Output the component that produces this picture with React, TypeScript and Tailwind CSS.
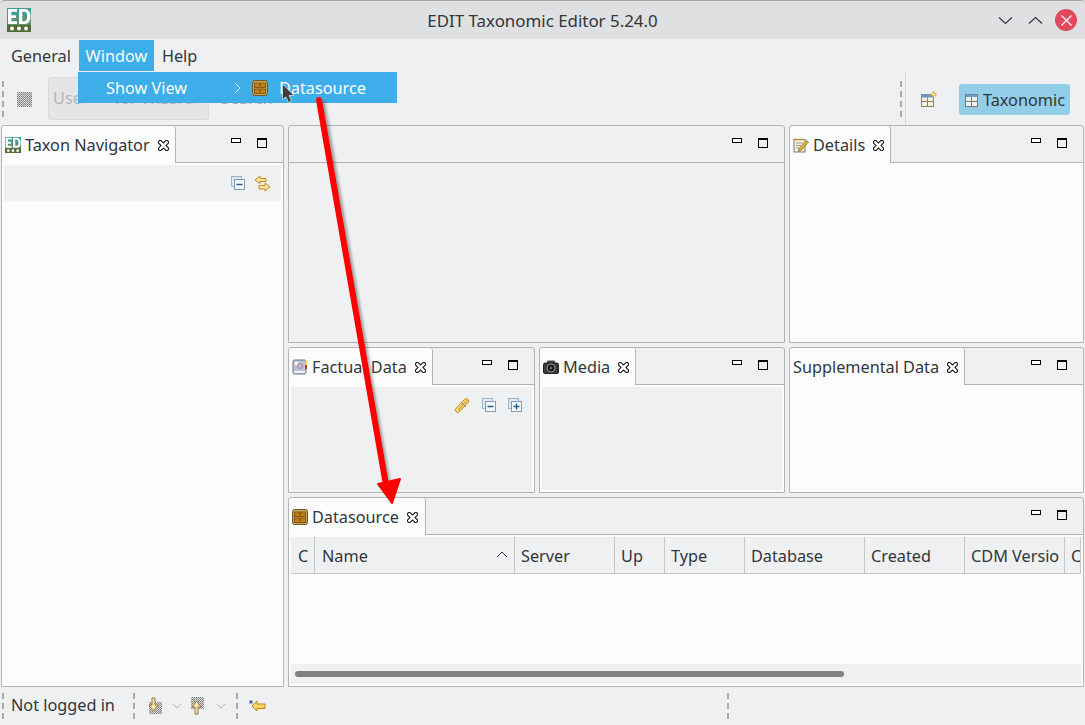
const BORDER = "border-[#b1b3b5]";

function CloseX() {
  return (
    <svg width="11" height="11" viewBox="0 0 11 11" className="shrink-0">
      <path d="M1.5 .5 L3 .5 L5.5 3 L8 .5 L9.5 .5 L10.5 1.5 L10.5 3 L8 5.5 L10.5 8 L10.5 9.5 L9.5 10.5 L8 10.5 L5.5 8 L3 10.5 L1.5 10.5 L.5 9.5 L.5 8 L3 5.5 L.5 3 L.5 1.5 Z" fill="#fff" stroke="#1f2327" strokeWidth="1.1" />
    </svg>
  );
}

function MinMax() {
  return (
    <div className="flex items-center gap-[16px]">
      <div className="mb-[4px] h-[5px] w-[10px] border border-black bg-white" />
      <div className="h-[10px] w-[10px] border border-black border-t-[2px]" />
    </div>
  );
}

function CollapseIcon({ plus }: { plus?: boolean }) {
  return (
    <svg width="16" height="16" viewBox="0 0 16 16">
      <rect x="1.5" y="1.5" width="10" height="10" fill="#dbe8f2" stroke="#9ab6cc" />
      <rect x="4.5" y="4.5" width="10" height="10" fill="#f4f8fb" stroke="#7d9db8" />
      <path d="M6.5 9.5h6" stroke="#1d5f8f" strokeWidth="1.4" />
      {plus && <path d="M9.5 6.5v6" stroke="#1d5f8f" strokeWidth="1.4" />}
    </svg>
  );
}

function LinkArrows() {
  return (
    <svg width="17" height="17" viewBox="0 0 17 17">
      <path d="M6 1 L1 5 L6 8.5 V6.5 H12 V3.5 H6 Z" fill="#fbe3a0" stroke="#c08a1c" />
      <path d="M11 8 L16 12 L11 16 V14 H5 V10.5 H11 Z" fill="#fbe3a0" stroke="#c08a1c" />
    </svg>
  );
}

function PencilLink() {
  return (
    <svg width="17" height="17" viewBox="0 0 17 17">
      <path d="M1.5 12 L11 2 C12.5 .8 15.5 2.5 14.5 5 L5 15 C3.5 16.2 .5 14.5 1.5 12 Z" fill="#f8d97c" stroke="#b9851d" />
      <path d="M4 13 L13 3.5 M7 5 L12 10" stroke="#b9851d" />
    </svg>
  );
}

function EdLogo({ size }: { size: number }) {
  return (
    <svg width={size} height={size} viewBox="0 0 24 24" className="shrink-0">
      <rect width="24" height="24" fill="#5a8f6f" />
      <rect width="24" height="8" fill="#3f9c96" />
      <rect y="17" width="24" height="7" fill="#556b35" />
      <path d="M1 1h9v2.800H4.400v3.400H9V10H4.400v3.200H10V16H1Z" fill="#fff" />
      <path d="M12 1h5.500C21.500 1 23.500 4 23.500 8.500S21.500 16 17.500 16H12Zm3.300 2.800v9.400h2c2 0 2.900-2 2.900-4.700s-.9-4.700-2.900-4.700Z" fill="#fff" />
      <circle cx="5" cy="20.500" r="2" fill="#fff" />
      <circle cx="12" cy="20.500" r="2" fill="#fff" />
      <circle cx="19" cy="20.500" r="2" fill="#fff" />
    </svg>
  );
}

function DrawerIcon() {
  return (
    <svg width="16" height="16" viewBox="0 0 16 16" className="shrink-0">
      <rect x=".5" y=".5" width="15" height="15" rx="2" fill="#c9a45c" stroke="#6d5a2a" />
      <rect x="2.500" y="3" width="11" height="4.500" fill="#c87f12" stroke="#6e4a0c" strokeWidth=".8" />
      <rect x="2.500" y="9" width="11" height="4.500" fill="#c87f12" stroke="#6e4a0c" strokeWidth=".8" />
      <path d="M7 5h2M7 11h2" stroke="#3d2a05" />
    </svg>
  );
}

function NoteIcon() {
  return (
    <svg width="16" height="16" viewBox="0 0 16 16" className="shrink-0">
      <rect x="1" y="2.500" width="11" height="12.500" fill="#f4f1e4" stroke="#7d7a6c" />
      <path d="M1.500 2.500h10" stroke="#d9a520" strokeWidth="2" strokeDasharray="1 1" />
      <path d="M3 6h7M3 8.500h5M3 11h4" stroke="#9a9a90" />
      <path d="M6 12 L13.500 3.500 L15.500 5 L8 13.500 L5.500 14.500 Z" fill="#e9b93a" stroke="#8a6412" strokeWidth=".8" />
    </svg>
  );
}

function BookIcon() {
  return (
    <svg width="16" height="16" viewBox="0 0 16 16" className="shrink-0">
      <rect x="1" y="1" width="13" height="14" rx="1.500" fill="#b9c2dc" stroke="#6a7488" />
      <rect x="13" y="2" width="2" height="4" fill="#e8d92f" />
      <rect x="13" y="6" width="2" height="4" fill="#d22e2e" />
      <circle cx="4.500" cy="4.500" r="2" fill="#fff8d0" />
      <circle cx="8" cy="7" r="2.500" fill="none" stroke="#b77aa0" />
      <rect x="2" y="12" width="11" height="2" fill="#eef0f5" />
    </svg>
  );
}

function CameraIcon() {
  return (
    <svg width="16" height="16" viewBox="0 0 16 16" className="shrink-0">
      <rect x="4" y="1.500" width="8" height="4" rx="1" fill="#4a4a4a" />
      <rect x=".5" y="4" width="15" height="10.500" rx="1.500" fill="#3a3a3a" stroke="#222" />
      <circle cx="8" cy="9" r="4" fill="#111" stroke="#999" />
      <circle cx="8" cy="9" r="1.500" fill="#6b6b6b" />
    </svg>
  );
}

type TabDef = { title?: string; icon?: React.ReactNode; width?: string };

function Folder({
  tab,
  className,
  bodyClass,
  children,
}: {
  tab?: TabDef;
  className?: string;
  bodyClass?: string;
  children?: React.ReactNode;
}) {
  return (
    <div className={`flex min-w-0 flex-col overflow-hidden rounded-t-[3px] border ${BORDER} bg-[#eff0f1] ${className ?? ""}`}>
      <div className="flex h-[37px] shrink-0">
        {tab ? (
          <div className={`flex items-center gap-[4px] rounded-t-[3px] border-r ${BORDER} bg-[#fcfcfc] pl-[3px] pt-px ${tab.width ?? ""}`}>
            {tab.icon}
            <span className="whitespace-nowrap text-[#31363b]">{tab.title}</span>
            <span className="ml-[4px]"><CloseX /></span>
          </div>
        ) : null}
        <div className={`flex flex-1 items-center justify-end border-b ${BORDER} pb-[3px] pr-[16px]`}>
          <MinMax />
        </div>
      </div>
      <div className={`flex min-h-0 flex-1 flex-col ${bodyClass ?? "bg-[#fcfcfc]"}`}>{children}</div>
    </div>
  );
}

function Grip({ className }: { className?: string }) {
  return <div className={`w-[2px] border-l-2 border-dashed border-[#a9abad] ${className ?? ""}`} />;
}

const columns = [
  { label: "C", w: "w-[24px]", pad: "pl-[7px] pr-[5px]" },
  { label: "Name", w: "w-[200px]", pad: "pl-[7px] pr-[5px]" },
  { label: "Server", w: "w-[100px]", pad: "pl-[6px] pr-[5px]" },
  { label: "Up", w: "w-[50px]", pad: "pl-[6px] pr-[5px]" },
  { label: "Type", w: "w-[80px]", pad: "pl-[6px] pr-[5px]" },
  { label: "Database", w: "w-[120px]", pad: "pl-[6px] pr-[5px]" },
  { label: "Created", w: "w-[100px]", pad: "pl-[6px] pr-[5px]" },
  { label: "CDM Versio", w: "w-[100px]", pad: "pl-[6px] pr-[5px]" },
  { label: "C", w: "flex-1", pad: "pl-[6px]" },
];

export default function App() {
  return (
    <div
      className="relative flex h-[725px] w-[1085px] flex-col overflow-hidden bg-[#eff0f1] text-[16.25px] text-[#31363b]"
      style={{ fontFamily: '"Noto Sans", sans-serif' }}
    >
      {/* title bar */}
      <div className="relative flex h-[39px] shrink-0 items-center justify-center rounded-t-[4px] border-t border-[#a5a6a7] bg-[#dfe0e1] pt-px">
        <span className="absolute left-[7px] top-[7px]"><EdLogo size={24} /></span>
        <span className="text-[16.9px]">EDIT Taxonomic Editor 5.24.0</span>
        <div className="absolute right-[8px] top-[8px] flex items-center gap-[15px]">
          <svg width="15" height="9" viewBox="0 0 15 9"><path d="M1 1.500 L7.500 7.500 L14 1.500" fill="none" stroke="#31363b" strokeWidth="1.200" /></svg>
          <svg width="15" height="9" viewBox="0 0 15 9"><path d="M1 7.500 L7.500 1.500 L14 7.500" fill="none" stroke="#31363b" strokeWidth="1.200" /></svg>
          <div className="-ml-[3px] flex h-[22px] w-[22px] items-center justify-center rounded-full bg-[#e2495f]">
            <svg width="11" height="11" viewBox="0 0 11 11"><path d="M.5 .5 L10.500 10.500 M10.500 .5 L.5 10.500" stroke="#fff" strokeWidth="1.200" /></svg>
          </div>
        </div>
      </div>

      {/* menu bar */}
      <div className="flex h-[33px] shrink-0 items-stretch pb-px pl-[5px] pt-px">
        <div className="flex items-center px-[6px] pt-px">General</div>
        <div className="ml-[2px] flex w-[75px] items-center justify-center bg-[#3daee9] pt-px text-[#fcfcfc]">Window</div>
        <div className="flex items-center px-[8px] pt-px">Help</div>
      </div>

      {/* toolbar */}
      <div className="flex h-[53px] shrink-0 items-center pl-[2px]">
        <Grip className="h-[36px]" />
        <svg width="15" height="15" viewBox="0 0 15 15" className="ml-[13px] mt-[2px]">
          <defs>
            <pattern id="dith" width="2" height="2" patternUnits="userSpaceOnUse">
              <rect width="2" height="2" fill="#dcdcdc" />
              <rect width="1" height="1" fill="#7a7a7a" />
              <rect x="1" y="1" width="1" height="1" fill="#8e8e8e" />
            </pattern>
          </defs>
          <rect width="15" height="15" rx="1" fill="url(#dith)" />
        </svg>
        <div className="ml-[16px] flex h-[43px] w-[161px] items-center rounded-[3px] border border-[#d9dadb] bg-[#e4e5e6] pl-[4px] text-[#b4b6b8]">
          Use
          <span className="ml-[33px]">for Wizard</span>
        </div>
        <span className="ml-[12px] text-[#a8aaac]">Search</span>
        <div className="flex-1" />
        <Grip className="h-[36px]" />
        <div className="ml-[3px] h-[52px] border-l border-[#d4d5d6]" />
        <svg width="16" height="16" viewBox="0 0 16 16" className="ml-[15px]">
          <rect x=".5" y="3.500" width="12" height="12" fill="#f4f1e4" stroke="#8a8468" />
          <rect x=".5" y="3.500" width="12" height="3" fill="#6d9bd0" />
          <path d="M6.500 6.500v9M.5 10.500h12" stroke="#8a8468" />
          <path d="M12.500 .5l1 2 2 1-2 1-1 2-1-2-2-1 2-1Z" fill="#fdf0b0" stroke="#d09a1d" />
        </svg>
        <div className="ml-[22px] mr-[15px] mt-[2px] flex h-[31px] w-[111px] items-center rounded-[3px] bg-[#93cee9] pl-[6px] pt-px">
          <svg width="13" height="13" viewBox="0 0 13 13" className="shrink-0">
            <rect x=".5" y=".5" width="12" height="12" fill="#eef3f5" stroke="#7a7a6c" />
            <rect x=".5" y=".5" width="12" height="2.500" fill="#6d9bd0" />
            <path d="M6.500 3v9.500M.5 7.500h12" stroke="#7a7a6c" />
          </svg>
          <span className="ml-[5px]">Taxonomic</span>
        </div>
      </div>

      {/* perspective */}
      <div className="flex min-h-0 flex-1 gap-[4px] px-px">
        <Folder tab={{ title: "Taxon Navigator", icon: <EdLogo size={16} />, width: "w-[174px]" }} className="w-[283px] shrink-0">
          <div className="mx-[2px] mt-[2px] flex h-[36px] items-center justify-end gap-[8px] bg-[#eff0f1] pr-[10px]">
            <CollapseIcon />
            <LinkArrows />
          </div>
        </Folder>

        <div className="flex min-w-0 flex-1 flex-col gap-[4px]">
          <div className="flex h-[218px] shrink-0 gap-[4px]">
            <Folder className="flex-1" bodyClass="bg-[#eff0f1]" />
            <Folder tab={{ title: "Details", icon: <NoteIcon />, width: "w-[101px]" }} className="w-[295px] shrink-0" />
          </div>
          <div className="flex h-[146px] shrink-0 gap-[4px]">
            <Folder tab={{ title: "Factual Data", icon: <BookIcon />, width: "w-[144px]" }} className="w-[247px] shrink-0">
              <div className="mx-[2px] mt-[2px] flex flex-1 items-start justify-end gap-[10px] bg-[#eff0f1] pr-[9px] pt-[10px]">
                <PencilLink />
                <CollapseIcon />
                <CollapseIcon plus />
              </div>
            </Folder>
            <Folder tab={{ title: "Media", icon: <CameraIcon />, width: "w-[96px]" }} className="flex-1">
              <div className="mx-[2px] mb-[2px] mt-[2px] flex-1 bg-[#eff0f1]" />
            </Folder>
            <Folder tab={{ title: "Supplemental Data", width: "w-[175px]" }} className="w-[295px] shrink-0" />
          </div>
          <Folder tab={{ title: "Datasource", icon: <DrawerIcon />, width: "w-[137px]" }} className="flex-1">
            <div className="mx-[2px] mt-[2px] flex h-[37px] shrink-0 border-b border-[#c3c5c6] bg-[#eff0f1]">
              {columns.map((col, i) => (
                <div
                  key={i}
                  className={`relative flex min-w-0 items-center overflow-hidden whitespace-nowrap border-r border-[#c3c5c6] pt-[2px] ${col.w} ${col.pad}`}
                >
                  <span className="block min-w-0 overflow-hidden">{col.label}</span>
                  {col.label === "Name" && (
                    <svg width="12" height="7" viewBox="0 0 12 7" className="absolute right-[6px] top-[14px]">
                      <path d="M1 6 L6 1 L11 6" fill="none" stroke="#31363b" strokeWidth="1" />
                    </svg>
                  )}
                </div>
              ))}
            </div>
            <div className="flex-1" />
            <div className="mx-[2px] mb-[2px] flex h-[20px] shrink-0 items-center bg-[#eff0f1] px-[4px]">
              <div className="h-[6px] w-[549px] rounded-full bg-[#7f8080]" />
            </div>
          </Folder>
        </div>
      </div>

      {/* status bar */}
      <div className="flex h-[38px] shrink-0 items-center pl-[2px]">
        <Grip className="h-[26px]" />
        <span className="ml-[7px] w-[122px] pb-px">Not logged in</span>
        <Grip className="h-[26px]" />
        <svg width="15" height="18" viewBox="0 0 15 18" className="ml-[13px]">
          <rect x="1" y="5" width="13" height="12" fill="url(#dith)" />
          <path d="M4 1h3v7h3l-4.500 6L1 8h3Z" fill="#f5e2b8" stroke="#9a7a3a" />
        </svg>
        <svg width="10" height="6" viewBox="0 0 10 6" className="ml-[9px]"><path d="M1 1l4 4 4-4" fill="none" stroke="#b4b6b8" /></svg>
        <svg width="15" height="18" viewBox="0 0 15 18" className="ml-[8px]">
          <rect x="1" y="0" width="13" height="12" fill="url(#dith)" />
          <path d="M5 17h3v-7h3L6.500 4 2 10h3Z" fill="#f5e2b8" stroke="#9a7a3a" />
        </svg>
        <svg width="10" height="6" viewBox="0 0 10 6" className="ml-[11px]"><path d="M1 1l4 4 4-4" fill="none" stroke="#b4b6b8" /></svg>
        <Grip className="ml-[10px] h-[26px]" />
        <svg width="17" height="13" viewBox="0 0 17 13" className="ml-[11px]">
          <path d="M8 1 L3 6 L8 11 V8.500 H16 V4 H8 Z" fill="#fbd667" stroke="#b5831b" />
          <path d="M0 2h4M2 0v4M.6 .6l2.800 2.800M3.400 .6L.6 3.400" stroke="#27509b" strokeWidth=".8" />
        </svg>
        <Grip className="ml-[461px] h-[26px]" />
      </div>

      {/* open submenu */}
      <div className="absolute left-[78px] top-[72px] flex h-[31px] w-[319px] items-center bg-[#3daee9] pt-px text-[#fcfcfc]">
        <span className="ml-[28px] w-[126px]">Show View</span>
        <svg width="8" height="12" viewBox="0 0 8 12" className="ml-[2px]"><path d="M1 1l5 5-5 5" fill="none" stroke="#fcfcfc" strokeWidth="1" /></svg>
        <span className="ml-[10px]"><DrawerIcon /></span>
        <span className="ml-[11px]">Datasource</span>
      </div>

      {/* cursor */}
      <svg width="14" height="21" viewBox="0 0 14 21" className="absolute left-[281px] top-[83px]">
        <path d="M1.500 1 V16.500 L5 14 L7.500 19.500 L10.500 18 L8 12.500 H13 Z" fill="#3b3d40" stroke="#eef2f4" strokeWidth=".7" />
      </svg>

      {/* annotation arrow */}
      <svg width="1085" height="725" viewBox="0 0 1085 725" className="pointer-events-none absolute left-0 top-0">
        <defs>
          <filter id="sh" x="-20%" y="-5%" width="140%" height="110%">
            <feGaussianBlur stdDeviation="1.500" />
          </filter>
        </defs>
        <g filter="url(#sh)" opacity=".35" transform="translate(2 2)">
          <path d="M320 100 L387 490" stroke="#000" strokeWidth="6" />
        </g>
        <path d="M319 100 L386 485" stroke="#fe0000" strokeWidth="6" strokeLinecap="round" />
        <path d="M378 484 L400 479 L392 503 Z" fill="#fe0000" stroke="#fe0000" strokeWidth="2" strokeLinejoin="round" />
      </svg>
    </div>
  );
}
